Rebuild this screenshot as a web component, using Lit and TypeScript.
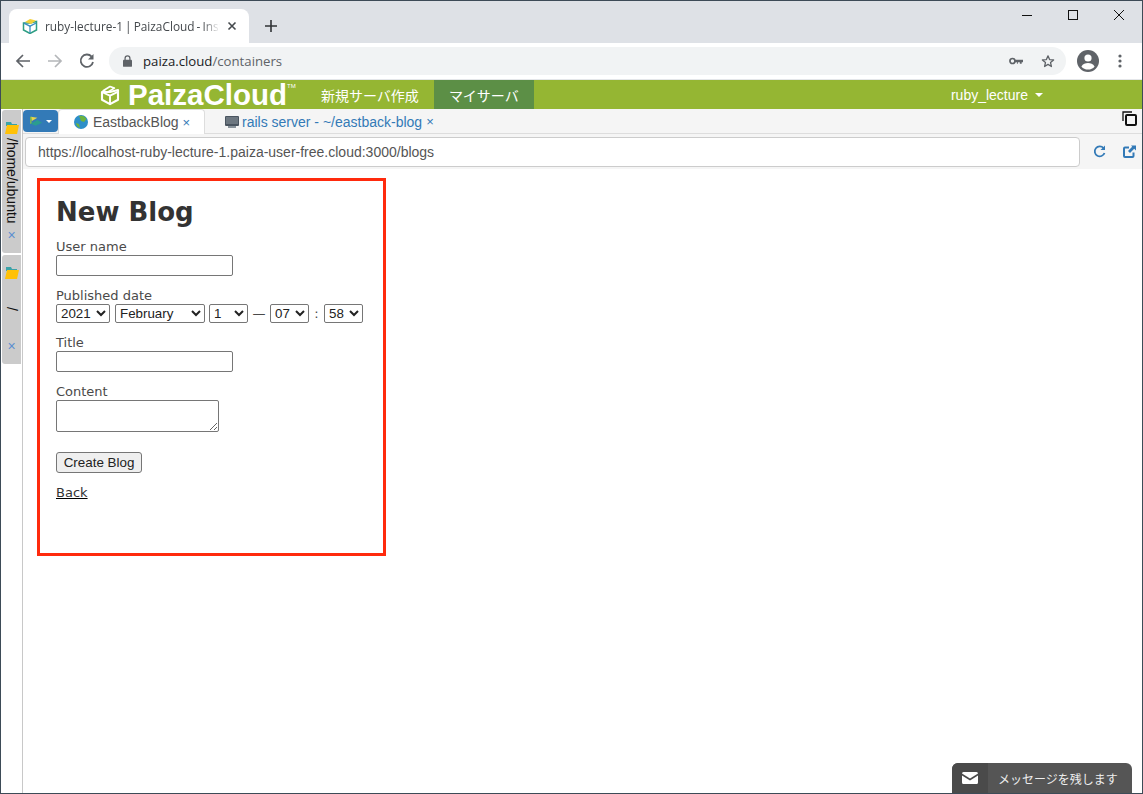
import { LitElement, html, css, svg } from "lit";
import { customElement } from "lit/decorators.js";

const logoCube = svg`<path d="M8 5.600 14.400 4V11.800L8 15.300 1.600 11.800V5.600Z" fill="none" stroke="#fff" stroke-width="1.700" stroke-linejoin="round"/><path d="M1.800 5.800 8 8.500l6.200-3M8 8.500v7" fill="none" stroke="#fff" stroke-width="1.500"/><path d="M2.500 4.600 8 1.200l3.500 1.300L6 5.800Z" fill="none" stroke="#fff" stroke-width="1.300" stroke-linejoin="round"/>`;

@customElement("app-root")
export class AppRoot extends LitElement {
  static styles = css`
    :host { display: block; width: 1143px; height: 794px; overflow: hidden; font-family: "Liberation Sans", sans-serif; }
    * { box-sizing: border-box; }
    .win { position: relative; width: 1143px; height: 794px; border: 1px solid #3d4b57; display: flex; flex-direction: column; background: #fff; overflow: hidden; }
    svg { display: block; flex: none; }

    .strip { height: 42px; background: #dee1e6; display: flex; align-items: flex-end; padding-left: 8px; flex: none; }
    .tab { width: 240px; height: 34px; background: #fff; border-radius: 8px 8px 0 0; display: flex; align-items: center; padding-left: 13px; }
    .tab-title { width: 175px; margin-left: 7px; font: 11.850px "Open Sans", "Noto Sans", sans-serif; word-spacing: -1px; color: #45494d; white-space: nowrap; overflow: hidden;
      -webkit-mask-image: linear-gradient(90deg, #000 90%, transparent); mask-image: linear-gradient(90deg, #000 90%, transparent); }
    .tab-x { margin-left: 7px; }
    .plus { margin: 0 0 11px 16px; }
    .wc { margin-left: auto; align-self: flex-start; display: flex; margin-top: 9px; padding-right: 18px; gap: 36px; }

    .toolbar { height: 37px; display: flex; align-items: center; flex: none; padding-left: 14px; border-bottom: 1px solid #e4e6e9; }
    .nav { width: 32px; }
    .omni { margin-left: -2px; width: 957px; height: 28px; border-radius: 14px; background: #f1f3f4; display: flex; align-items: center; padding-left: 14px; }
    .url { margin-left: 11px; font: 13.200px "Open Sans", "Noto Sans", sans-serif; color: #202124; }
    .url span { color: #5f6368; }
    .omni-r { margin-left: auto; display: flex; gap: 18px; padding-right: 11px; align-items: center; }
    .avatar { margin-left: 11px; }
    .dots { margin-left: 19px; }

    .green { height: 29px; background: #95b633; display: flex; align-items: stretch; flex: none; color: #fff; padding-left: 99px; }
    .logo { display: flex; align-items: center; width: 221px; gap: 8px; font: bold 29.500px/28px "Liberation Sans", sans-serif; }
    .logo sup { font-size: 6px; line-height: 6px; align-self: flex-start; margin: 3px 0 0 -8px; font-weight: normal; }
    .menu { display: flex; align-items: center; font: 14px "Noto Sans CJK JP", sans-serif; padding: 0 15px 0 0; }
    .menu.on { background: #5c8f46; padding: 0 15px; }
    .user { margin-left: auto; margin-right: 99px; display: flex; align-items: center; font-size: 14px; gap: 7px; }
    .caret { width: 0; height: 0; border: 4px solid transparent; border-top-color: #fff; border-bottom: 0; }

    .body { flex: 1; display: flex; min-height: 0; }
    .side { width: 22px; flex: none; border-right: 1px solid #c8c8c8; padding: 1px 1px 0 1px; display: flex; flex-direction: column; gap: 2px; }
    .vt { width: 19px; background: #cbcbcb; border-radius: 3px 0 0 3px; display: flex; flex-direction: column; align-items: center; padding-top: 10px; }
    .vt.a { height: 143px; }
    .vt.b { height: 109px; }
    .vt b { writing-mode: vertical-rl; font: 14px "Liberation Sans", sans-serif; color: #111; margin-top: 3px; line-height: 16px; }
    .vt.b b { margin-top: 27px; }
    .vt i { margin-top: auto; margin-bottom: 11px; font: normal 14px/14px "Liberation Sans", sans-serif; color: #5b8fd0; }

    .main { flex: 1; min-width: 0; display: flex; flex-direction: column; }
    .tabs { height: 25px; background: #f5f5f5; border-bottom: 1px solid #ddd; display: flex; align-items: flex-start; flex: none; }
    .dd { width: 35px; height: 22px; margin-top: 1px; background: #337ab7; border-radius: 4px; display: flex; align-items: center; justify-content: center; gap: 3px; }
    .dd .caret { border-width: 3.500px; border-bottom: 0; }
    .t { height: 25px; display: flex; align-items: center; padding: 0 15px; font-size: 14px; color: #337ab7; white-space: nowrap; }
    .t.on { width: 147px; background: #fff; border: 1px solid #ddd; border-bottom: 0; border-radius: 4px 4px 0 0; color: #555; }
    .t.srv { padding-left: 20px; }
    .t em { font-style: normal; margin-left: 4px; font-size: 13px; color: #337ab7; }
    .t svg { margin-right: 3px; }
    .t.on svg { margin-right: 5px; }
    .tabs .copy { margin-left: auto; margin-right: 5px; margin-top: 2px; }

    .addr { height: 35px; background: #f5f5f5; display: flex; align-items: center; padding: 0 6px 0 2px; flex: none; }
    .addr-in { width: 1055px; height: 30px; background: #fff; border: 1px solid #ccc; border-radius: 4px; padding-left: 12px; display: flex; align-items: center; font-size: 14px; color: #555; }
    .addr svg:first-of-type { margin-left: 13px; }
    .addr svg + svg { margin-left: 17px; }

    .page { flex: 1; padding: 9px 0 0 14px; }
    .box { width: 349px; height: 378px; border: 3px solid #ff2a0d; padding: 0 0 0 16px; font: 13px/16px "DejaVu Sans", sans-serif; color: #4a4a4a; }
    h1 { margin: 0; height: 58px; padding-top: 15px; font: bold 26px/32px "DejaVu Sans", sans-serif; color: #333; }
    .field { display: block; margin-bottom: 12px; }
    .field label { display: block; height: 16px; }
    input { display: block; width: 177px; height: 21px; margin: 0; border: 1px solid #767676; border-radius: 2px; background: #fff; padding: 1px 2px; }
    textarea { display: block; width: 163px; height: 32px; margin: 0; border: 1px solid #767676; border-radius: 2px; padding: 2px; }
    .dates { display: flex; align-items: center; height: 19px; }
    select { height: 19px; margin: 0; font: 13.330px "Liberation Sans", sans-serif; background: #fff; color: #222; border: 1px solid #767676; border-radius: 2px; }
    .s-y { width: 54px; margin-right: 5px; }
    .s-m { width: 90px; margin-right: 4px; }
    .s-d { width: 39px; }
    .s-h { width: 39px; }
    .s-n { width: 39px; }
    .dash { width: 22px; text-align: center; }
    .colon { width: 15px; text-align: center; }
    .actions { margin-top: 20px; }
    button { display: block; width: 86px; height: 21px; margin: 0; padding: 0; font: 13.400px "Liberation Sans", sans-serif; color: #222; background: #efefef; border: 1px solid #767676; border-radius: 3px; }
    a { display: inline-block; margin-top: 12px; color: #333; text-decoration: underline; text-decoration-color: #000; }

    .msg { position: absolute; right: 10px; bottom: 0; width: 180px; height: 30px; background: #555; border-radius: 6px 6px 0 0; display: flex; align-items: center; color: #eee; overflow: hidden; font: 12px "Noto Sans CJK JP", sans-serif; }
    .msg-i { width: 36px; height: 30px; background: #4a4a4a; display: flex; align-items: center; justify-content: center; margin-right: 10px; }
  `;

  render() {
    return html`<div class="win">
      <div class="strip">
        <div class="tab">
          <svg width="16" height="16" viewBox="0 0 16 16">
            <path d="M8 5 14.500 3.500V12L8 15.500 1.500 12V5Z" fill="none" stroke="#2f9e83" stroke-width="1.500"/>
            <path d="M1.800 5.200 8 8.200l6.200-3.200" fill="none" stroke="#3a8fc0" stroke-width="1.300"/>
            <path d="M8 8v7" stroke="#3a8fc0" stroke-width="1.300"/>
            <path d="M3 4 8 1l6 1.500L9 6Z" fill="#f2d03a"/>
          </svg>
          <div class="tab-title">ruby-lecture-1 | PaizaCloud - Instant IDE</div>
          <svg class="tab-x" width="10" height="10" viewBox="0 0 10 10"><path d="M1.500 1.500l7 7M8.500 1.500l-7 7" stroke="#45494d" stroke-width="1.600"/></svg>
        </div>
        <svg class="plus" width="12" height="12" viewBox="0 0 12 12"><path d="M6 0v12M0 6h12" stroke="#303336" stroke-width="1.600"/></svg>
        <div class="wc">
          <svg width="10" height="10" viewBox="0 0 10 10"><path d="M0 5.500h10" stroke="#111" stroke-width="1"/></svg>
          <svg width="10" height="10" viewBox="0 0 10 10"><rect x=".5" y=".5" width="9" height="9" fill="none" stroke="#111"/></svg>
          <svg width="10" height="10" viewBox="0 0 10 10"><path d="M0 0l10 10M10 0 0 10" stroke="#111" stroke-width="1"/></svg>
        </div>
      </div>

      <div class="toolbar">
        <svg class="nav" width="32" height="16" viewBox="0 0 32 16" preserveAspectRatio="xMinYMid meet"><path d="M15 8H2M8 2 2 8l6 6" fill="none" stroke="#5f6368" stroke-width="1.700"/></svg>
        <svg class="nav" width="32" height="16" viewBox="0 0 32 16" preserveAspectRatio="xMinYMid meet"><path d="M1 8h13M8 2l6 6-6 6" fill="none" stroke="#b4b6b9" stroke-width="1.700"/></svg>
        <svg class="nav" width="32" height="16" viewBox="0 0 32 16" preserveAspectRatio="xMinYMid meet"><path d="M12.600 3.600A6.200 6.200 0 1 0 14 9" fill="none" stroke="#5f6368" stroke-width="1.800"/><path d="M14.500 1v5.500H9Z" fill="#5f6368"/></svg>
        <div class="omni">
          <svg width="9" height="12" viewBox="0 0 10 13"><rect x="0" y="5" width="10" height="8" rx="1" fill="#5f6368"/><path d="M2.300 5.500V3.600a2.700 2.700 0 0 1 5.400 0v1.900" fill="none" stroke="#5f6368" stroke-width="1.400"/></svg>
          <div class="url">paiza.cloud<span>/containers</span></div>
          <div class="omni-r">
            <svg width="14" height="8" viewBox="0 0 15 8"><circle cx="3.700" cy="4" r="2.700" fill="none" stroke="#5f6368" stroke-width="1.800"/><path d="M6 2.700h9v2.600h-1.400V7h-2V5.300H9.500V7h-1V5.300H6Z" fill="#5f6368"/></svg>
            <svg width="14" height="14" viewBox="0 0 16 15"><path d="M8 1.600 9.800 5.900l4.600.4-3.500 3 1 4.500L8 11.400l-3.900 2.400 1-4.500-3.500-3 4.600-.4Z" fill="none" stroke="#5f6368" stroke-width="1.500" stroke-linejoin="round"/></svg>
          </div>
        </div>
        <svg class="avatar" width="22" height="22" viewBox="0 0 22 22"><circle cx="11" cy="11" r="11" fill="#5f6368"/><circle cx="11" cy="8" r="3.600" fill="#fff"/><path d="M4.400 16.400c1.500-2.600 4-3.400 6.600-3.400s5.100.8 6.600 3.400a8.500 8.500 0 0 1-13.200 0Z" fill="#fff"/></svg>
        <svg class="dots" width="4" height="14" viewBox="0 0 4 14"><circle cx="2" cy="2" r="1.600" fill="#5f6368"/><circle cx="2" cy="7" r="1.600" fill="#5f6368"/><circle cx="2" cy="12" r="1.600" fill="#5f6368"/></svg>
      </div>

      <div class="green">
        <div class="logo">
          <svg width="20" height="22" viewBox="0 0 16 16">${logoCube}</svg>
          <span>PaizaCloud</span><sup>TM</sup>
        </div>
        <div class="menu">新規サーバ作成</div>
        <div class="menu on">マイサーバ</div>
        <div class="user">ruby_lecture <span class="caret"></span></div>
      </div>

      <div class="body">
        <div class="side">
          <div class="vt a">
            <svg width="14" height="15" viewBox="0 0 14 15"><path d="M1 2h5l1 2h5v2H1Z" fill="#3aa3a8"/><path d="M2 5h12l-2 9H0Z" fill="#ffc107"/></svg>
            <b>/home/ubuntu</b><i>×</i>
          </div>
          <div class="vt b">
            <svg width="14" height="15" viewBox="0 0 14 15"><path d="M1 2h5l1 2h5v2H1Z" fill="#3aa3a8"/><path d="M2 5h12l-2 9H0Z" fill="#ffc107"/></svg>
            <b>/</b><i>×</i>
          </div>
        </div>
        <div class="main">
          <div class="tabs">
            <div class="dd">
              <svg width="14" height="12" viewBox="0 0 15 12"><path d="M2 1.500 9 2.500 3 6Z" fill="#e8d44a"/><path d="M2 1.500V9" stroke="#8cc63f" stroke-width="1.400"/><path d="M2 9l7-4 5 3-7 3Z" fill="#2a9d8f"/></svg>
              <span class="caret"></span>
            </div>
            <div class="t on">
              <svg width="14" height="14" viewBox="0 0 14 14"><circle cx="7" cy="7" r="7" fill="#2e8fc9"/><path d="M5 1c3-1 6 0 7.500 3L10 7 7 6 6 3Z" fill="#6cb33f"/><path d="M2 8l3 1 1 4a6 6 0 0 1-4-5Z" fill="#6cb33f"/></svg>
              EastbackBlog<em>×</em>
            </div>
            <div class="t srv">
              <svg width="14" height="12" viewBox="0 0 14 12"><rect width="14" height="10" rx="1" fill="#4a5560"/><rect x="1" y="1" width="12" height="7" fill="#6d7780"/><rect x="3" y="10" width="8" height="2" fill="#8a949c"/></svg>
              rails server - ~/eastback-blog<em>×</em>
            </div>
            <svg class="copy" width="15" height="15" viewBox="0 0 15 15"><path d="M1 10V1h9" fill="none" stroke="#111" stroke-width="1.300"/><rect x="4" y="4" width="10" height="10" rx="1" fill="none" stroke="#111" stroke-width="2"/></svg>
          </div>
          <div class="addr">
            <div class="addr-in">https://localhost-ruby-lecture-1.paiza-user-free.cloud:3000/blogs</div>
            <svg width="13" height="13" viewBox="0 0 13 13"><path d="M10.500 3A5 5 0 1 0 11.500 8" fill="none" stroke="#337ab7" stroke-width="1.800"/><path d="M12 .5V5H7.500Z" fill="#337ab7"/></svg>
            <svg width="13" height="13" viewBox="0 0 13 13"><path d="M6 2.500H2a1 1 0 0 0-1 1V11a1 1 0 0 0 1 1h7.500a1 1 0 0 0 1-1V7.500" fill="none" stroke="#337ab7" stroke-width="2"/><path d="M8 .5h5v5l-1.800-1.700L7 8 5 6l4.200-4.200Z" fill="#337ab7"/></svg>
          </div>
          <div class="page">
            <div class="box">
              <h1>New Blog</h1>
              <div class="field"><label>User name</label><input type="text" /></div>
              <div class="field">
                <label>Published date</label>
                <div class="dates">
                  <select class="s-y"><option>2021</option></select>
                  <select class="s-m"><option>February</option></select>
                  <select class="s-d"><option>1</option></select>
                  <span class="dash">—</span>
                  <select class="s-h"><option>07</option></select>
                  <span class="colon">:</span>
                  <select class="s-n"><option>58</option></select>
                </div>
              </div>
              <div class="field"><label>Title</label><input type="text" /></div>
              <div class="field"><label>Content</label><textarea></textarea></div>
              <div class="actions"><button>Create Blog</button></div>
              <a href="#">Back</a>
            </div>
          </div>
        </div>
      </div>

      <div class="msg">
        <div class="msg-i"><svg width="16" height="12" viewBox="0 0 16 12"><path d="M1.500 0h13A1.500 1.500 0 0 1 16 1.500L8 6.500 0 1.500A1.500 1.500 0 0 1 1.500 0Z" fill="#fff"/><path d="M0 3.500 8 8.500l8-5V10.500A1.500 1.500 0 0 1 14.500 12h-13A1.500 1.500 0 0 1 0 10.500Z" fill="#fff"/></svg></div>
        メッセージを残します
      </div>
    </div>`;
  }
}
